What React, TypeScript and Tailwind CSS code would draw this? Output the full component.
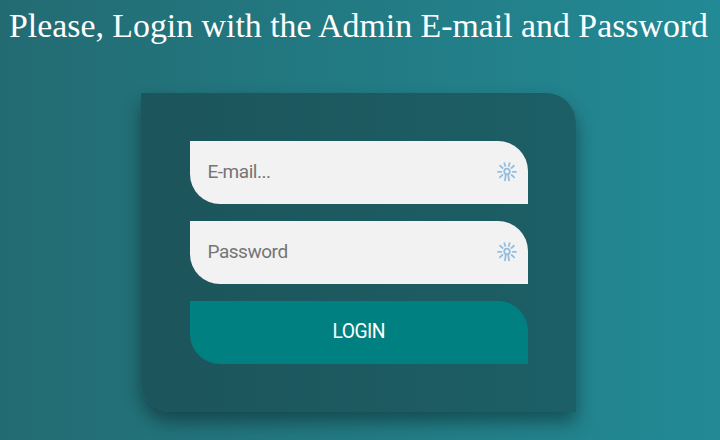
function CredentialIcon() {
  return (
    <svg className="mb-[2px] h-[20px] w-[20px] shrink-0" viewBox="0 0 20 20" fill="none" stroke="#91bfe2" strokeWidth="1.8" strokeLinecap="round" aria-hidden="true">
      <circle cx="10" cy="9.5" r="2.8" />
      <path d="M8.8 12.3 8 18.3M11.2 12.3 12 18.3M8.2 4 7.4 1.2M11.8 4 12.6 1.2M5.6 6 3.1 3.8M14.4 6 16.9 3.8M4.3 9.8H1M15.7 9.8H19M5.4 13 2.8 15.3M14.6 13 17.2 15.3" />
    </svg>
  );
}

function Field({ label, type }: { label: string; type: string }) {
  return (
    <label className="flex h-[63px] items-center rounded-tr-[30px] rounded-bl-[30px] bg-[#f2f2f2] pr-[11px] pl-[18px]">
      <input type={type} placeholder={label} className="mb-[1px] min-w-0 flex-1 bg-transparent text-[19px] leading-[24px] text-[#333] outline-none placeholder:tracking-[-0.025em] placeholder:text-[#757575]" />
      <CredentialIcon />
    </label>
  );
}

export default function App() {
  return (
    <main className="h-[440px] w-[720px] overflow-hidden bg-[linear-gradient(to_right,#236b72,#228a95)] font-['Roboto',sans-serif]">
      <h1 className="pt-[6px] pr-[3px] text-center font-['Liberation_Serif',serif] text-[33.85px] leading-[40px] whitespace-nowrap text-white">
        Please, Login with the Admin E-mail and Password
      </h1>
      <form className="mt-[47px] ml-[141px] flex h-[319px] w-[435px] flex-col gap-[17px] rounded-tr-[30px] rounded-bl-[30px] bg-[linear-gradient(to_right,#1c555b,#1c5f66)] pt-[48px] pr-[48px] pl-[48.5px] shadow-[0_10px_18px_rgba(0,0,0,0.38)]">
        <Field label="E-mail..." type="email" />
        <Field label="Password" type="password" />
        <button type="button" className="h-[63px] rounded-tr-[30px] rounded-bl-[30px] bg-[#008080] text-[19.3px] tracking-[-0.03em] text-white">
          LOGIN
        </button>
      </form>
    </main>
  );
}
